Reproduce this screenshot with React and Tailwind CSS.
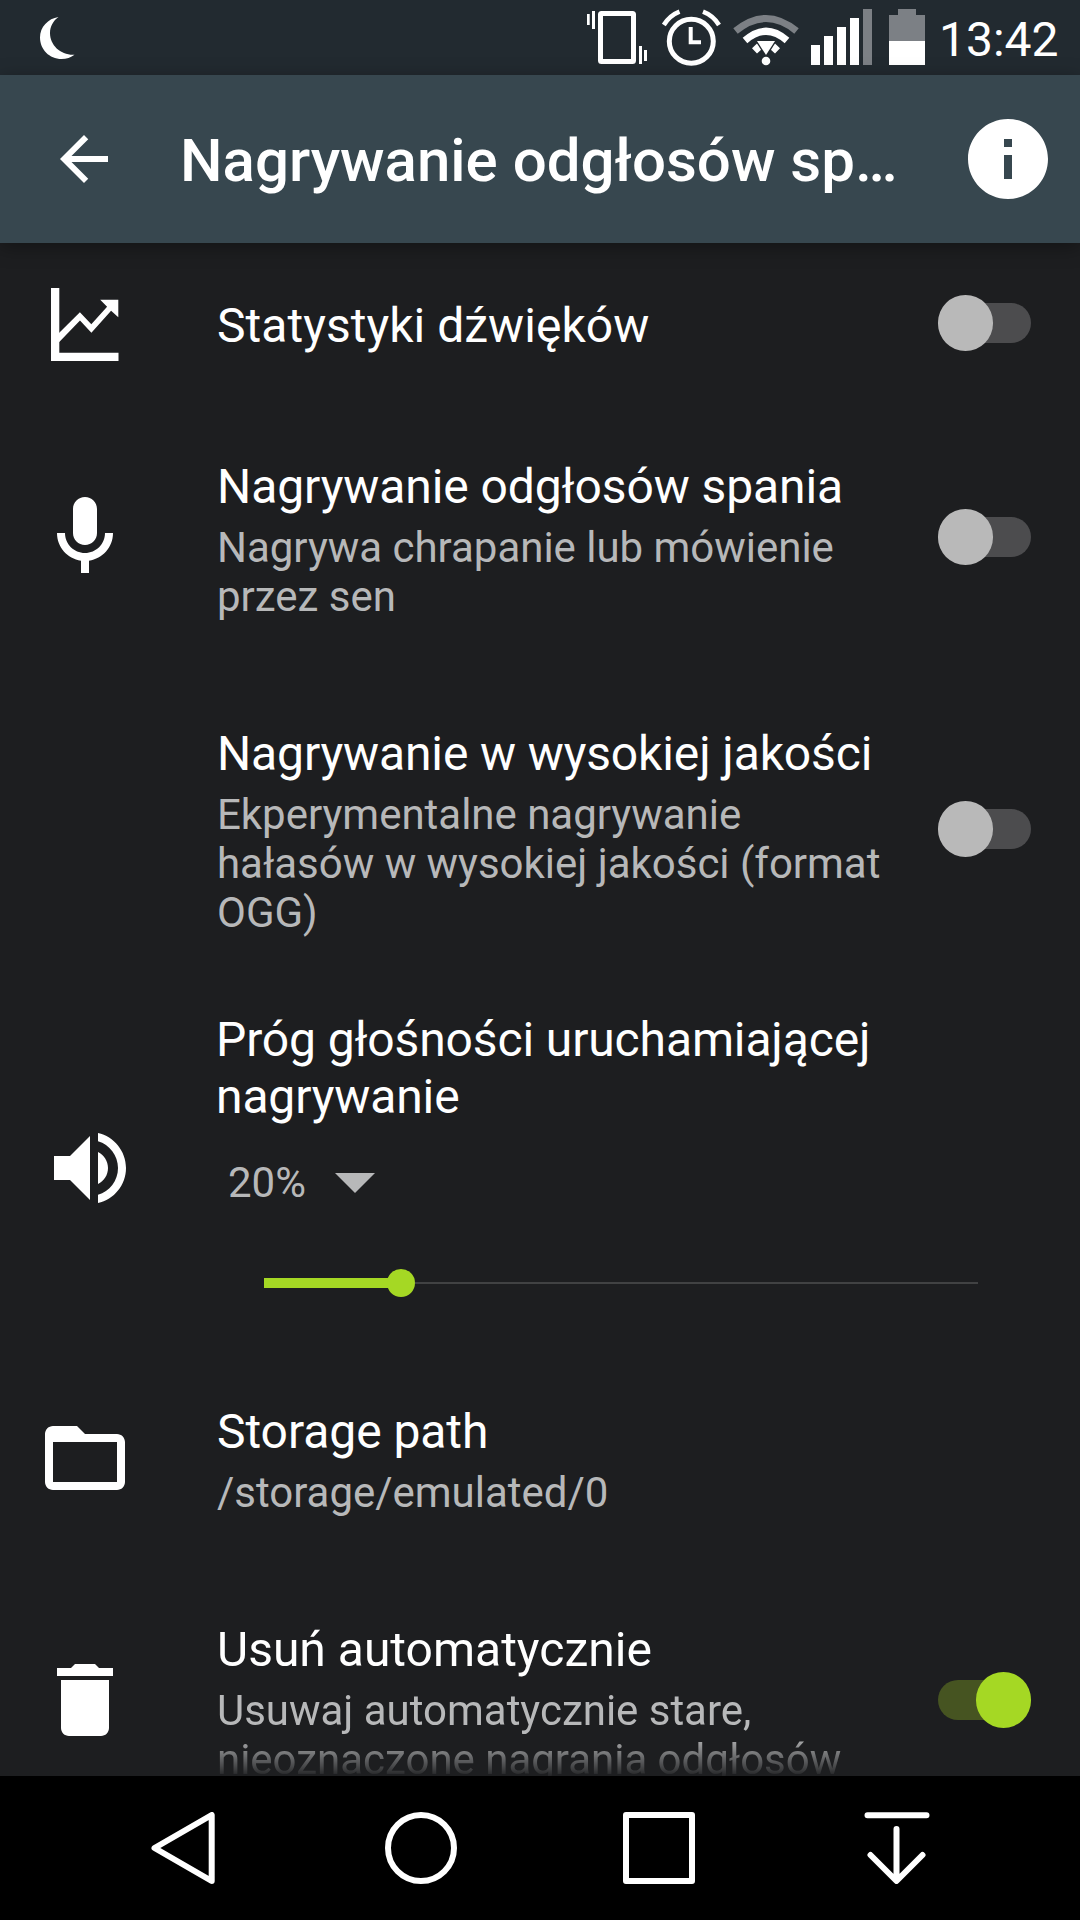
import React, { useState } from "react";
import clsx from "clsx";

const MoonIcon = () => (
  <svg className="w-[36px] h-[44px]" viewBox="0 0 36 44" fill="#fff">
    <path d="M18.500 1C8 2.500 0 11 0 21.500 0 33.500 9.500 43 21.500 43 26.500 43 31 41.500 34.500 38.700 21 39.500 10 29.500 10 17 10 10.500 13.300 4.500 18.500 1z" />
  </svg>
);

const VibrateIcon = () => (
  <svg className="w-[60px] h-[56px]" viewBox="0 0 60 56" fill="#fff">
    <rect x="0" y="4" width="2.700" height="11" />
    <rect x="5" y="1" width="3" height="18" />
    <rect
      x="13.500"
      y="3.500"
      width="33"
      height="48"
      rx="1"
      fill="none"
      stroke="#fff"
      strokeWidth="5"
      strokeLinejoin="round"
    />
    <rect x="52" y="36" width="3" height="18" />
    <rect x="57" y="40" width="3" height="11" />
  </svg>
);

const AlarmIcon = () => (
  <svg className="w-[60px] h-[58px]" viewBox="0 0 60 58" fill="none" stroke="#fff">
    <circle cx="29.300" cy="33.300" r="22" strokeWidth="5" />
    <path d="M28.700 19v15.200h10.300" strokeWidth="4" />
    <path d="M1.800 17Q7.800 7.500 17.500 3.700M57 17Q51 7.500 41 3.700" strokeWidth="4.600" />
  </svg>
);

const WifiIcon = () => (
  <svg className="w-[66px] h-[52px]" viewBox="0 0 66 52" fill="none">
    <path d="M2.500 17Q33 -8 63.500 17" stroke="#7c8085" strokeWidth="7" />
    <path d="M12 26.500Q33 8 54 26.500" stroke="#fff" strokeWidth="7" />
    <path d="M19 34.200l5-4.700 5 5.500-5 4.500zM47 34.200l-5-4.700-5 5.500 5 4.500z" fill="#fff" />
    <path d="M22 26h22L33 44z" fill="#22292e" />
    <path d="M24 27h18l-9 14z" fill="#fff" />
    <circle cx="33" cy="47" r="4.300" fill="#fff" />
  </svg>
);

const SignalIcon = () => (
  <svg className="w-[61px] h-[56px]" viewBox="0 0 61 56" fill="#fff">
    <rect x="0" y="36" width="9" height="20" />
    <rect x="13" y="27" width="9" height="29" />
    <rect x="26" y="18" width="9" height="38" />
    <rect x="39" y="9" width="9" height="47" />
    <rect x="52" y="0" width="9" height="56" fill="#7c8085" />
  </svg>
);

const BatteryIcon = () => (
  <svg className="w-[36px] h-[56px]" viewBox="0 0 36 56">
    <path d="M9 0h18v6h9v26H0V6h9z" fill="#7c8085" />
    <rect x="0" y="32" width="36" height="24" fill="#fff" />
  </svg>
);

const ChartIcon = () => (
  <svg className="w-[68px] h-[73px]" viewBox="0 0 68 73" fill="#fff">
    <path d="M0 0h8.300v64.700H67.500V73H0z" />
    <path d="M8 44.900L28.900 24.200l11.400 12.100 15.800-17.500-6.900-7h18.100v17.500l-7.200-6.600-19.700 22.100-11.400-12.200L8 54.200z" />
  </svg>
);

const MaterialIcon = ({ d }) => (
  <svg className="w-24 h-24" viewBox="0 0 24 24" fill="#fff">
    <path d={d} />
  </svg>
);

const icons = {
  mic: "M12 14c1.660 0 3-1.340 3-3V5c0-1.660-1.340-3-3-3S9 3.340 9 5v6c0 1.660 1.340 3 3 3zm5-3c0 2.760-2.240 5-5 5s-5-2.240-5-5H5c0 3.530 2.610 6.430 6 6.920V21h2v-3.080c3.390-.49 6-3.390 6-6.920h-2z",
  volume:
    "M3 9v6h4l5 5V4L7 9H3zm13.500 3c0-1.770-1.020-3.290-2.500-4.030v8.050c1.480-.73 2.500-2.250 2.500-4.020zM14 3.230v2.060c2.890.86 5 3.540 5 6.710s-2.110 5.850-5 6.710v2.060c4.010-.91 7-4.490 7-8.770s-2.990-7.860-7-8.770z",
  folder:
    "M20 6h-8l-2-2H4c-1.100 0-2 .9-2 2v12c0 1.100.9 2 2 2h16c1.100 0 2-.9 2-2V8c0-1.100-.9-2-2-2zm0 12H4V8h16v10z",
  trash:
    "M6 19c0 1.100.9 2 2 2h8c1.100 0 2-.9 2-2V7H6v12zM19 4h-3.500l-1-1h-5l-1 1H5v2h14V4z",
  info: "M12 2C6.480 2 2 6.480 2 12s4.480 10 10 10 10-4.480 10-10S17.520 2 12 2zm1 15h-2v-6h2v6zm0-8h-2V7h2v2z",
  back: "M20 11H7.830l5.590-5.590L12 4l-8 8 8 8 1.410-1.410L7.830 13H20v-2z",
};

const Toggle = ({ on, onClick }) => (
  <button
    type="button"
    role="switch"
    aria-checked={on}
    onClick={onClick}
    className={clsx(
      "flex h-10 w-[93px] shrink-0 items-center rounded-full",
      on ? "justify-end bg-[#465421]" : "justify-start bg-[#4c4c4e]"
    )}
  >
    <span
      className={clsx(
        "h-14 w-[55px] shrink-0 rounded-full",
        on ? "bg-[#a5d824]" : "bg-[#b9b9b9]"
      )}
    />
  </button>
);

const SettingRow = ({ icon, title, summary, height, textClass, on, onToggle }) => (
  <div className={clsx("flex shrink-0 items-center pr-[49.5px]", height)}>
    <div className="flex w-[217px] shrink-0 pl-[37px]">{icon}</div>
    <div className={clsx("w-[672px] shrink-0", textClass)}>
      <h2 className="text-[48px] leading-[57px] text-white">{title}</h2>
      {summary && (
        <p className="mt-2 text-[42px] leading-[49px] tracking-[-0.02px] text-[#b7b8b9]">
          {summary}
        </p>
      )}
    </div>
    {onToggle && (
      <div className="ml-auto">
        <Toggle on={on} onClick={onToggle} />
      </div>
    )}
  </div>
);

const App = () => {
  const [settings, setSettings] = useState({
    stats: false,
    recording: false,
    highQuality: false,
    autoDelete: true,
  });
  const threshold = 20;

  const toggle = (name) => () =>
    setSettings((prev) => ({ ...prev, [name]: !prev[name] }));

  return (
    <div className="flex h-[1920px] w-[1080px] flex-col overflow-hidden bg-[#1d1e20] font-[Roboto,sans-serif]">
      {/* Status bar */}
      <div className="flex h-[75px] shrink-0 items-start bg-[#222a30] pl-10">
        <div className="pt-4">
          <MoonIcon />
        </div>
        <div className="ml-auto flex pr-[21px]">
          <div className="mt-[10px] mr-[15px]">
            <VibrateIcon />
          </div>
          <div className="mt-2 mr-[11px]">
            <AlarmIcon />
          </div>
          <div className="mt-[14px] mr-[12px]">
            <WifiIcon />
          </div>
          <div className="mt-[9px] mr-[17px]">
            <SignalIcon />
          </div>
          <div className="mt-[9px] mr-[14px]">
            <BatteryIcon />
          </div>
          <span className="mt-[11px] w-[120px] text-[48px] leading-[57px] text-white">
            13:42
          </span>
        </div>
      </div>

      {/* App bar */}
      <header className="z-10 flex h-[168px] shrink-0 items-center bg-[#37474f] shadow-[0_4px_18px_rgba(0,0,0,0.35)]">
        <button type="button" className="ml-12 [&>svg]:size-[72px]">
          <MaterialIcon d={icons.back} />
        </button>
        <h1 className="ml-[60px] w-[730px] whitespace-nowrap pt-1 text-[60px] font-medium leading-[72px] text-white">
          Nagrywanie odgłosów sp…
        </h1>
        <button type="button" className="ml-auto mr-6">
          <MaterialIcon d={icons.info} />
        </button>
      </header>

      {/* Settings */}
      <main className="flex flex-1 flex-col overflow-hidden">
        <SettingRow
          height="h-[160px]"
          textClass="pt-[5px] [&>h2]:tracking-[0.03px]"
          icon={
            <div className="pt-[3px] pl-[14px]">
              <ChartIcon />
            </div>
          }
          title="Statystyki dźwięków"
          on={settings.stats}
          onToggle={toggle("stats")}
        />
        <SettingRow
          height="h-[268px]"
          textClass="pt-[5px] [&>h2]:tracking-[-0.09px]"
          icon={<MaterialIcon d={icons.mic} />}
          title="Nagrywanie odgłosów spania"
          summary="Nagrywa chrapanie lub mówienie przez sen"
          on={settings.recording}
          onToggle={toggle("recording")}
        />
        <SettingRow
          height="h-[316px]"
          textClass="pt-[3px] [&>h2]:tracking-[-0.13px]"
          title="Nagrywanie w wysokiej jakości"
          summary="Ekperymentalne nagrywanie hałasów w wysokiej jakości (format OGG)"
          on={settings.highQuality}
          onToggle={toggle("highQuality")}
        />

        {/* Volume threshold */}
        <div className="flex h-[362px] shrink-0 items-center">
          <div className="w-[216px] shrink-0 pl-[42px]">
            <MaterialIcon d={icons.volume} />
          </div>
          <div className="flex h-full flex-col pt-6">
            <h2 className="w-[700px] text-[48px] leading-[57px] tracking-[-0.13px] text-white">
              Próg głośności uruchamiającej nagrywanie
            </h2>
            <div className="mt-[33px] flex items-center pl-3">
              <span className="w-[107px] text-[42px] leading-[49px] text-[#b7b8b9]">
                {threshold}%
              </span>
              <svg className="w-10 h-5" viewBox="0 0 40 20" fill="#b7b8b9">
                <path d="M0 0h40L20 20z" />
              </svg>
            </div>
            <div className="mt-[62px] ml-12 flex h-7 w-[714px] items-center">
              <div className="h-[10px] w-[125px] bg-[#a5d824]" />
              <div className="-ml-0.5 size-7 rounded-full bg-[#a5d824]" />
              <div className="h-0.5 flex-1 bg-[#414243]" />
            </div>
          </div>
        </div>

        <SettingRow
          height="h-[218px]"
          textClass="pt-[3px] [&>h2]:tracking-[-0.06px]"
          icon={<MaterialIcon d={icons.folder} />}
          title="Storage path"
          summary="/storage/emulated/0"
        />
        {/* Last visible text fades out at the bottom edge */}
        <SettingRow
          height="h-[266px]"
          textClass="pt-[5px] mask-[linear-gradient(to_bottom,black_120px,transparent_162px)]"
          icon={<MaterialIcon d={icons.trash} />}
          title="Usuń automatycznie"
          summary="Usuwaj automatycznie stare, nieoznaczone nagrania odgłosów"
          on={settings.autoDelete}
          onToggle={toggle("autoDelete")}
        />
      </main>

      {/* Navigation bar */}
      <nav className="flex h-36 shrink-0 items-center bg-black px-16 [&>button]:flex [&>button]:w-[238px] [&>button]:justify-center">
        <button type="button">
          <svg className="size-[72px]" viewBox="0 0 72 72" fill="none" stroke="#fff" strokeWidth="6" strokeLinejoin="round">
            <path d="M7.500 36L64.700 3v66z" />
          </svg>
        </button>
        <button type="button">
          <svg className="size-[72px]" viewBox="0 0 72 72" fill="none" stroke="#fff" strokeWidth="6">
            <circle cx="36" cy="36" r="33" />
          </svg>
        </button>
        <button type="button">
          <svg className="size-[72px]" viewBox="0 0 72 72" fill="none" stroke="#fff" strokeWidth="6" strokeLinejoin="round">
            <path d="M3 3h66v66H3z" />
          </svg>
        </button>
        <button type="button">
          <svg className="size-[72px]" viewBox="0 0 72 72" fill="none" stroke="#fff" strokeWidth="6" strokeLinecap="round" strokeLinejoin="round">
            <path d="M6.500 3.300h59M35.500 17v51.500M9.500 43l26 26 26-26" />
          </svg>
        </button>
      </nav>
    </div>
  );
};

export default App;
